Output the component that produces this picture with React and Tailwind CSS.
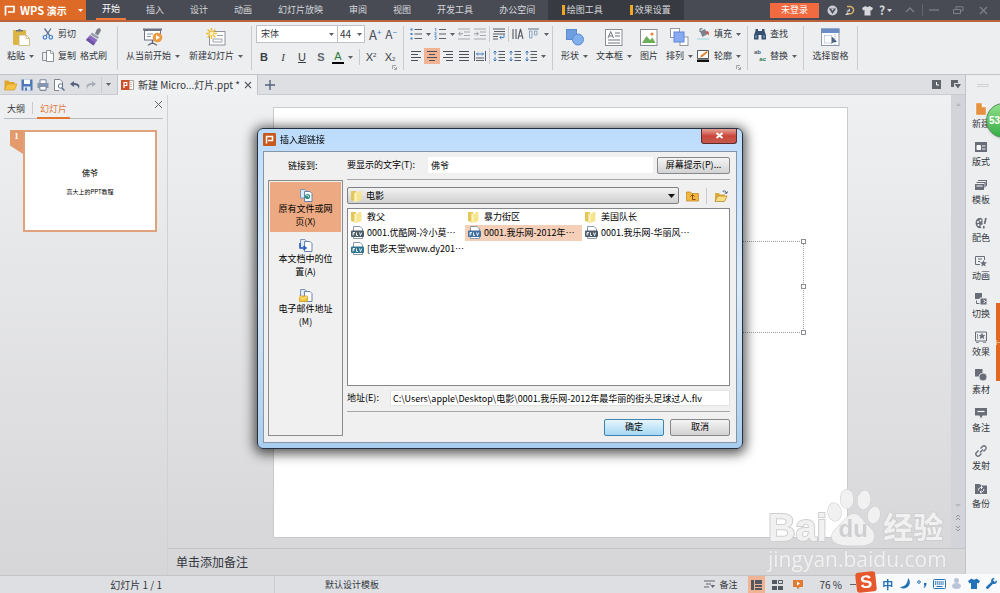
import { useState } from 'react';

const TABS = ['开始', '插入', '设计', '动画', '幻灯片放映', '审阅', '视图', '开发工具', '办公空间'];

const Icon = ({ w = 12, h = 12, className = '', children }) => (
  <svg
    width={w}
    height={h}
    viewBox={`0 0 ${w} ${h}`}
    fill="none"
    className={`shrink-0 ${className}`}
    aria-hidden="true"
  >
    {children}
  </svg>
);

const Caret = ({ className = 'text-[#5c6068]' }) => (
  <Icon w={5} h={3} className={className}>
    <path d="M0 0h5L2.500 3z" fill="currentColor" />
  </Icon>
);

const Corner = () => (
  <Icon w={5} h={5} className="absolute bottom-1 right-[6px]">
    <path d="M.5 4V.5H4M2 4.500h2.500V2M2 2l2 2" stroke="#8b8f96" strokeWidth=".8" />
  </Icon>
);

const Sep = ({ className = 'h-4' }) => <span className={`w-px shrink-0 bg-[#c9cbd0] ${className}`} />;

/* ---------- ribbon icons ---------- */

const PasteIcon = () => (
  <Icon w={18} h={18}>
    <rect x="1" y="2" width="13" height="15" rx="1" fill="#dcb645" />
    <path d="M4 3.500V2h2a1.600 1.600 0 0 1 3 0h2v1.500z" fill="#6d737c" />
    <path d="M7 7h7l3.500 3.500V17.500H7z" fill="#fff" stroke="#c9b062" strokeWidth=".8" />
    <path d="M14 7v3.500h3.500" stroke="#c9b062" strokeWidth=".8" />
  </Icon>
);

const CutIcon = () => (
  <Icon>
    <path d="M2.500.5 8 8M9 .5 3.800 8" stroke="#5f7390" strokeWidth="1.300" />
    <circle cx="3" cy="9.300" r="1.800" stroke="#3d7fcb" strokeWidth="1.200" />
    <circle cx="8.800" cy="9.300" r="1.800" stroke="#3d7fcb" strokeWidth="1.200" />
  </Icon>
);

const CopyIcon = () => (
  <Icon>
    <path d="M4 2.500H.5v8H4" stroke="#8b8f96" />
    <path d="M4.500.5H9L11.500 3v8.500h-7z" fill="#fff" stroke="#8b8f96" />
    <path d="M8.500.5v3h3" stroke="#8b8f96" strokeWidth=".8" />
  </Icon>
);

const BrushIcon = () => (
  <Icon w={18} h={18}>
    <path d="m12 1 3-1 1 2.500-3 5-3-2z" fill="#7b8089" />
    <path d="m7 4.500 7 4.500-1.500 2-7-4.500z" fill="#9aa0a9" />
    <path d="m5 7 7.500 5-4 5.500L1 12z" fill="#8a6cc0" />
    <path d="m3 9.500-2 2.500L8.500 17.500 10 15z" fill="#6f52a8" />
  </Icon>
);

const PlayFromIcon = () => (
  <Icon w={20} h={18}>
    <path d="M0 1.500h19" stroke="#6d7482" strokeWidth="2" />
    <rect x="1.500" y="2.500" width="16" height="9.500" fill="#fff" stroke="#6d7482" />
    <path d="M4 6h6M4 8.500h4" stroke="#8b93a3" />
    <path d="M9.500 12v4M5 17.200l4.500-2.500 4.500 2.500" stroke="#5d6370" strokeWidth="1.300" />
    <circle cx="14.500" cy="9.500" r="4.800" fill="#ee9a3e" />
    <path d="m13 7 4 2.500-4 2.500z" fill="#fff" />
  </Icon>
);

const NewSlideIcon = () => (
  <Icon w={20} h={18}>
    <rect x="3.500" y="3.500" width="15.500" height="13.500" fill="#fff" stroke="#8d929b" />
    <path d="M11 7.500h6M7 11h9v3H7z" stroke="#9aa0aa" />
    <path d="M5.500 0v11M0 5.500h11M1.600 1.600l7.800 7.800M9.400 1.600 1.600 9.400" stroke="#f0bd35" strokeWidth="1.400" />
    <circle cx="5.500" cy="5.500" r="2" fill="#fff3b8" />
  </Icon>
);

const BulletsIcon = () => (
  <Icon>
    <path d="M4.500 1.500H12M4.500 6H12M4.500 10.500H12" stroke="#5a5f68" strokeWidth="1.200" />
    <path d="M.5 1.500h2M.5 6h2M.5 10.500h2" stroke="#4a7fc0" strokeWidth="2" />
  </Icon>
);

const NumbersIcon = () => (
  <Icon>
    <path d="M5 1.500h7M5 6h7M5 10.500h7" stroke="#5a5f68" strokeWidth="1.200" />
    <path d="m.8.8 1-.5v3M.5 4.800h1.800L.8 7h1.800M.5 8.700h1.800L1.500 10c1.500 0 1.200 1.800-.8 1.500" stroke="#4a7fc0" strokeWidth=".8" />
  </Icon>
);

const IndentIcon = ({ flip }) => (
  <Icon>
    <path d="M0 1h12M6 4h6M6 7.500h6M0 11h12" stroke="#a5a8ae" strokeWidth="1.100" />
    <path d={flip ? 'M0 5.800h4M2.500 4l2 1.800-2 1.800' : 'M5 5.800H1M2.500 4l-2 1.800 2 1.800'} stroke="#94979d" />
  </Icon>
);

const WrapIcon = () => (
  <Icon>
    <path d="M0 1h12M1 3.500h11M0 6h12M0 8.500h5M0 11h5" stroke="#565b64" strokeWidth="1.100" />
    <path d="M11 6v3.500H7M8.500 7.800 6.800 9.500l1.700 1.700" stroke="#4a7fc0" />
  </Icon>
);

const AlignIcon = ({ kind }) => {
  const paths = {
    left: 'M1 1.500h10M1 4.500h7M1 7.500h10M1 10.500h7',
    center: 'M1 1.500h10M3 4.500h6M1 7.500h10M3 10.500h6',
    right: 'M1 1.500h10M4 4.500h7M1 7.500h10M4 10.500h7',
    justify: 'M1 1.500h10M1 4.500h10M1 7.500h10M1 10.500h10',
  };
  return (
    <Icon>
      <path d={paths[kind]} stroke="#4a4f58" strokeWidth="1.200" />
    </Icon>
  );
};

const SpreadIcon = () => (
  <Icon>
    <path d="M.5 1v10M11.500 1v10M2 8h8M2 10.500h8" stroke="#565b64" />
    <path d="M2.500 4h7M4 2.500 2.500 4 4 5.500M8 2.500 9.500 4 8 5.500" stroke="#4a7fc0" />
  </Icon>
);

const SpacingIcon = () => (
  <Icon>
    <path d="M5.500 1.500H12M5.500 4.500H12M5.500 7.500H12M5.500 10.500H12" stroke="#565b64" strokeWidth="1.100" />
    <path d="M2 1v4M.5 2.500 2 1l1.500 1.500M2 11V7M.5 9.500 2 11l1.500-1.500" stroke="#3f77bf" />
  </Icon>
);

const VertTextIcon = () => (
  <Icon>
    <path d="M1 1v10M4 1v10M6 11l2.500-10L11 11M7 8h3.500" stroke="#565b64" strokeWidth="1.100" />
  </Icon>
);

const VertAlignIcon = () => (
  <Icon>
    <path d="M0 1h11" stroke="#7b8696" strokeWidth="1.200" />
    <path d="M1.500 3h2.500v7H1.500zM6.500 3H9v4H6.500z" stroke="#8ba3bf" />
  </Icon>
);

const ShapesIcon = () => (
  <Icon w={18} h={18}>
    <rect x=".5" y="1.500" width="10" height="10" fill="#6f9fe0" stroke="#5a8cd2" />
    <circle cx="12" cy="11.500" r="5.500" fill="#7fb0ec" stroke="#5a8cd2" />
  </Icon>
);

const TextBoxIcon = () => (
  <Icon w={18} h={18}>
    <rect x=".5" y="1.500" width="16.500" height="16" fill="#fff" stroke="#878c95" />
    <path d="m3 10 2.700-6.500L8.500 10M4 8h3.500M10 5h5M10 8h5M3 12h12M3 15h12" stroke="#6d727b" strokeWidth="1" />
  </Icon>
);

const PictureIcon = () => (
  <Icon w={18} h={18}>
    <rect x=".5" y="1.500" width="16.500" height="16" fill="#fff" stroke="#878c95" />
    <path d="m2 15 4.500-7 3.500 4 2.500-2.500L15.500 15z" fill="#6cae5a" />
    <circle cx="12" cy="6" r="1.600" fill="#e8823f" />
  </Icon>
);

const ArrangeIcon = () => (
  <Icon w={19} h={18}>
    <rect x=".5" y=".5" width="9" height="9" fill="#fff" stroke="#9298a3" />
    <rect x="10" y="9" width="8" height="8.500" fill="#fff" stroke="#9298a3" />
    <rect x="4" y="4" width="10" height="10" fill="#88aaf0" stroke="#5f86d8" />
  </Icon>
);

const FillIcon = () => (
  <Icon w={13}>
    <path d="M3 3.500 8 1l2.500 5-5 3z" fill="#7a828e" />
    <path d="M3 4V.8h2.500" stroke="#5d6470" />
    <path d="M9.500 3c2 0 3 2 2 4.500C10.500 6 10 5 9 5z" fill="#d24a3d" />
    <path d="M0 10h12v2H0z" fill="#bfe3e6" />
  </Icon>
);

const OutlineIcon = () => (
  <Icon w={13}>
    <path d="M.5.500h11v8H.5z" fill="#fff" stroke="#565b64" />
    <path d="m3 7.500 1-2.300L9.500 1l1.300 1.300-5 4.500z" fill="#e58a35" />
    <path d="M0 9.500h12V12H0z" fill="#111" />
  </Icon>
);

const FindIcon = () => (
  <Icon>
    <path d="M1.500 3V1H4v2h4V1h2.500v2L12 7v4.500H7.500V7h-3v4.500H0V7z" fill="#34506e" />
    <path d="M2 7v3M10 7v3" stroke="#8fb0d0" />
  </Icon>
);

const ReplaceIcon = () => (
  <span className="flex w-3 shrink-0 flex-col font-['Liberation_Sans'] text-[6px] font-bold leading-[7px]" aria-hidden="true">
    <span className="text-left text-[#4a5a70]">ab</span>
    <span className="text-right text-[#2f7a55]">ac</span>
  </span>
);

const PaneIcon = () => (
  <Icon w={19} h={18}>
    <rect x=".5" y="1" width="17.500" height="16.500" fill="#fff" stroke="#8d98ad" />
    <path d="M0 .5h18.500V5H0z" fill="#6e8cc4" />
    <path d="M3.500 7.500h8M3.500 7.500V15M3.500 15h8M14 6v11" stroke="#9aa7c0" strokeDasharray="1 1" />
    <path d="M10.500 8v8l2-1.800 3.500-.4z" fill="#4d5f80" />
  </Icon>
);

/* ---------- ribbon controls ---------- */

function BigButton({ icon, label, caret }) {
  return (
    <button className="flex shrink-0 flex-col items-center pt-[6px]">
      {icon}
      <span className="flex h-5 items-center gap-1 whitespace-nowrap">
        {label}
        {caret && <Caret />}
      </span>
    </button>
  );
}

function SmallButton({ icon, label, caret }) {
  return (
    <button className="flex h-5 items-center gap-1 whitespace-nowrap">
      {icon}
      {label}
      {caret && <Caret />}
    </button>
  );
}

function Tool({ label, active, caret, children }) {
  return (
    <button
      aria-label={label}
      className={`flex h-4 shrink-0 items-center justify-center gap-1 ${caret ? 'w-6' : 'w-4'} ${active ? 'bg-[#f0b394]' : ''}`}
    >
      {children}
      {caret && <Caret />}
    </button>
  );
}

function Ribbon() {
  return (
    <div className="flex h-[53px] shrink-0 items-stretch overflow-hidden border-b border-[#c2c4ca] bg-[#eceef0] text-[#33363c]">
      <div className="flex w-[117px] shrink-0 gap-1 pl-[7px]">
        <BigButton icon={<PasteIcon />} label="粘贴" caret />
        <div className="flex flex-col gap-0.5 pl-1 pt-0.5">
          <SmallButton icon={<CutIcon />} label="剪切" />
          <SmallButton icon={<CopyIcon />} label="复制" />
        </div>
        <BigButton icon={<BrushIcon />} label="格式刷" />
      </div>
      <Sep className="my-1" />
      <div className="flex w-[133px] shrink-0 justify-between px-2">
        <BigButton icon={<PlayFromIcon />} label="从当前开始" caret />
        <BigButton icon={<NewSlideIcon />} label="新建幻灯片" caret />
      </div>
      <Sep className="my-1" />

      <div className="relative flex w-[151px] shrink-0 flex-col gap-[6px] pl-1 pt-[3px]">
        <div className="flex items-center">
          <span className="relative flex h-[18px] w-[82px] items-center border border-[#bfc2c8] bg-white">
            <select aria-label="字体" className="h-full w-full appearance-none bg-transparent pl-1 outline-none">
              <option>宋体</option>
            </select>
            <Caret className="pointer-events-none absolute right-[3px] text-[#5c6068]" />
          </span>
          <span className="relative -ml-px flex h-[18px] w-[28px] items-center border border-[#bfc2c8] bg-white">
            <select aria-label="字号" className="h-full w-full appearance-none bg-transparent pl-0.5 text-[10px] outline-none">
              <option>44</option>
            </select>
            <Caret className="pointer-events-none absolute right-0.5 text-[#5c6068]" />
          </span>
          <button aria-label="增大字号" className="ml-1 flex text-[13px] leading-none text-[#4a4f58]">
            A<span className="text-[8px] leading-none text-[#3f77bf]">+</span>
          </button>
          <button aria-label="减小字号" className="ml-1 flex text-[12px] leading-none text-[#4a4f58]">
            A<span className="text-[8px] leading-none text-[#3f77bf]">−</span>
          </button>
        </div>
        <div className="flex items-center gap-[3px] font-['Liberation_Sans'] text-[11px] leading-none text-[#3a3e46]">
          <button className="h-4 w-4 font-bold">B</button>
          <button className="h-4 w-4 font-['Liberation_Serif'] italic">I</button>
          <button className="h-4 w-4 underline">U</button>
          <button className="h-4 w-4 font-bold text-[#62666e]">S</button>
          <button aria-label="字体颜色" className="flex h-4 w-6 items-center gap-1">
            <span className="w-3 border-b-2 border-black leading-[11px] text-[#2c7a3c]">A</span>
            <Caret />
          </button>
          <Sep />
          <button aria-label="上标" className="flex h-4 w-4 items-center justify-center">
            X<span className="mb-1 text-[6px]">2</span>
          </button>
          <button aria-label="下标" className="flex h-4 w-4 items-center justify-center">
            X<span className="mt-1 text-[6px]">2</span>
          </button>
        </div>
        <Corner />
      </div>
      <Sep className="my-1" />

      <div className="flex w-[148px] shrink-0 flex-col gap-[6px] pl-1 pt-1">
        <div className="flex items-center">
          <Tool label="项目符号" caret><BulletsIcon /></Tool>
          <Tool label="编号" caret><NumbersIcon /></Tool>
          <Tool label="减少缩进"><IndentIcon /></Tool>
          <Tool label="增加缩进"><IndentIcon flip /></Tool>
          <Sep className="mx-px h-4" />
          <Tool label="换行"><WrapIcon /></Tool>
          <Sep className="mx-px h-4" />
          <Tool label="文字方向"><VertTextIcon /></Tool>
          <Tool label="对齐文本" caret><VertAlignIcon /></Tool>
        </div>
        <div className="flex items-center">
          <Tool label="左对齐"><AlignIcon kind="left" /></Tool>
          <Tool label="居中" active><AlignIcon kind="center" /></Tool>
          <Tool label="右对齐"><AlignIcon kind="right" /></Tool>
          <Tool label="两端对齐"><AlignIcon kind="justify" /></Tool>
          <Tool label="分散对齐"><SpreadIcon /></Tool>
          <Sep className="mx-px h-4" />
          <Tool label="增大段距"><SpacingIcon /></Tool>
          <Tool label="减小段距"><SpacingIcon /></Tool>
          <Tool label="行距" caret><SpacingIcon /></Tool>
        </div>
      </div>
      <Sep className="my-1" />

      <div className="relative flex w-[194px] shrink-0 gap-2 pl-2">
        <BigButton icon={<ShapesIcon />} label="形状" caret />
        <BigButton icon={<TextBoxIcon />} label="文本框" caret />
        <BigButton icon={<PictureIcon />} label="图片" />
        <BigButton icon={<ArrangeIcon />} label="排列" caret />
        <div className="-ml-1 flex flex-col gap-0.5 pt-0.5">
          <SmallButton icon={<FillIcon />} label="填充" caret />
          <SmallButton icon={<OutlineIcon />} label="轮廓" caret />
        </div>
        <Corner />
      </div>
      <Sep className="my-1" />

      <div className="flex w-[55px] shrink-0 flex-col gap-0.5 pl-[6px] pt-0.5">
        <SmallButton icon={<FindIcon />} label="查找" />
        <SmallButton icon={<ReplaceIcon />} label="替换" caret />
      </div>
      <Sep className="my-1" />
      <div className="flex w-[53px] shrink-0 justify-center">
        <BigButton icon={<PaneIcon />} label="选择窗格" />
      </div>
      <Sep className="my-1" />
    </div>
  );
}

/* ---------- title bar ---------- */

function TitleBar() {
  return (
    <header className="flex h-[22px] shrink-0 items-stretch border-b-2 border-[#b9633d] bg-[#484b54] text-[#d6d8dc]">
      <button className="flex w-[86px] shrink-0 items-center gap-1 bg-[#dd6a26] pl-1 text-[11px] font-bold text-white">
        <Icon w={12} h={11}>
          <path d="M1.500 10.500v-9H10v5.500H4" stroke="#fff" strokeWidth="1.700" />
        </Icon>
        <span className="whitespace-nowrap">WPS <span className="text-[10px]">演示</span></span>
        <Caret className="ml-auto mr-[3px] text-white" />
      </button>
      <nav className="ml-[3px] flex shrink-0">
        {TABS.map((tab, i) => (
          <button key={tab} className={`px-[7px] ${i === 0 ? 'text-white' : ''}`}>
            <span className={`flex h-5 items-center px-[6px] ${i === 0 ? 'border-b-2 border-[#ee7a3c]' : ''}`}>{tab}</span>
          </button>
        ))}
      </nav>
      <div className="flex w-[136px] shrink-0 justify-around bg-[#373a41]">
        {['绘图工具', '效果设置'].map((tab) => (
          <button key={tab} className="flex items-center gap-0.5">
            <span className="h-[10px] w-[3px] bg-[#f2a622]" />
            {tab}
          </button>
        ))}
      </div>
      <div className="ml-auto flex items-center pr-3">
        <button className="mr-2 h-[15px] w-[49px] bg-[#f26a3f] text-white">未登录</button>
        <button aria-label="云服务" className="w-[18px]">
          <Icon w={11} h={11}>
            <circle cx="5.500" cy="5.500" r="5" fill="#c9ccd2" />
            <path d="M2 3.500h7L5.500 9z" fill="#484b54" />
            <path d="m4 3.500 1.500 2.500L7 3.500z" fill="#c9ccd2" />
          </Icon>
        </button>
        <button aria-label="同步" className="w-[17px]">
          <Icon w={10} h={11}>
            <path d="M2 1.500h3.500a3.700 3.700 0 1 1-3 6.500" stroke="#d6b064" strokeWidth="1.500" />
            <path d="M5 3.500v3H1M0 10l2.500-3 1.500 3z" fill="#c9ccd2" />
          </Icon>
        </button>
        <button aria-label="皮肤" className="w-[17px]">
          <Icon w={11} h={11}>
            <path d="M3.500 1 0 3l1.200 2.500L2.500 5v5.500h6V5l1.300.5L11 3 7.500 1c-1 1.300-3 1.300-4 0z" fill="#d6d8dc" />
          </Icon>
        </button>
        <button aria-label="帮助" className="flex w-[26px] items-center gap-0.5 text-[12px] font-bold">
          ?<Caret className="text-[#d6d8dc]" />
        </button>
        <button aria-label="收起功能区" className="w-[17px] text-[#7d8088]">
          <Icon w={10} h={6}><path d="m1 5 4-4 4 4" stroke="currentColor" strokeWidth="1.300" /></Icon>
        </button>
        <Sep className="h-3 opacity-20" />
        <button aria-label="最小化" className="ml-[6px] w-6 text-[#7d8088]">
          <Icon w={10} h={6}><path d="M0 3h10" stroke="currentColor" strokeWidth="1.300" /></Icon>
        </button>
        <button aria-label="还原" className="w-[26px] text-[#7d8088]">
          <Icon w={11} h={8}>
            <path d="M.5 3.500h7v4h-7zM3 3V.8h7v4H8" stroke="currentColor" />
          </Icon>
        </button>
        <button aria-label="关闭" className="text-[#7d8088]">
          <Icon w={9} h={9}><path d="m1 1 7 7M8 1 1 8" stroke="currentColor" strokeWidth="1.300" /></Icon>
        </button>
      </div>
    </header>
  );
}

/* ---------- document tabs ---------- */

const PptMark = () => (
  <Icon w={13}>
    <path d="M7 1.500h5.500v9H7" fill="#fff" stroke="#b3a29a" />
    <path d="M9 3.500h2M9 5.500h2M9 7.500h2" stroke="#c9b8b0" />
    <rect y="1" width="8.500" height="10" fill="#c9502a" />
    <path d="M3 9V3.500h2.800v3H3" stroke="#fff" strokeWidth="1.200" />
  </Icon>
);

function DocumentBar() {
  return (
    <div className="flex h-5 shrink-0 items-stretch border-b border-[#c9ccd1] bg-[#dddfe3]">
      <div className="flex w-[118px] shrink-0 items-center gap-1 border-r border-[#c2c4ca] pl-1">
        <button aria-label="打开">
          <Icon w={13}>
            <path d="M.5 11V1.500h4l1 1.500h5v2" fill="#e2a62c" />
            <path d="M.5 11 3 5h10l-2.500 6z" fill="#f5c445" stroke="#d59a25" strokeWidth=".7" />
          </Icon>
        </button>
        <button aria-label="保存">
          <Icon>
            <path d="M.5.5h11v11H.5z" fill="#4d78ba" />
            <path d="M3 .5h6V5H3z" fill="#fff" /><path d="M2.500 7.500h7v4h-7z" fill="#e3ebf6" />
            <path d="M4 8.500h2v3H4z" fill="#4d78ba" />
          </Icon>
        </button>
        <button aria-label="打印">
          <Icon>
            <path d="M3 4V.8h6V4M3 8v3.300h6V8" fill="#fff" stroke="#77839a" />
            <path d="M.5 4h11v5h-11z" fill="#8796b0" /><path d="M3 7.500h6v3.500H3z" fill="#fff" stroke="#77839a" strokeWidth=".7" />
          </Icon>
        </button>
        <button aria-label="打印预览">
          <Icon>
            <path d="M9.500 6V3L7 .5H1.500v11H6" fill="#fff" stroke="#7b8390" />
            <circle cx="7.500" cy="7" r="2.200" stroke="#5b6f90" /><path d="m9 9 2.500 2.500" stroke="#5b6f90" strokeWidth="1.500" />
          </Icon>
        </button>
        <button aria-label="撤销">
          <Icon><path d="M5 2 1 5l4 3V6c3 0 4.500 1 4.500 4C12 6 9 4 5 4z" fill="#56637c" /></Icon>
        </button>
        <button aria-label="恢复">
          <Icon><path d="m7 2 4 3-4 3V6c-3 0-4.500 1-4.500 4C0 6 3 4 7 4z" fill="#a9aeb8" /></Icon>
        </button>
        <Sep />
        <button aria-label="更多"><Caret /></button>
      </div>
      <div className="-mb-px flex w-[139px] shrink-0 items-center bg-[#f0f1f2] pl-[3px] text-[#33363c]">
        <PptMark />
        <span className="ml-1 flex-1 whitespace-nowrap text-[10px]">新建 Micro...灯片.ppt *</span>
        <button aria-label="关闭文档" className="mr-[5px]">
          <Icon w={8} h={8}><path d="m1 1 6 6M7 1 1 7" stroke="#565b64" strokeWidth="1.100" /></Icon>
        </button>
      </div>
      <button aria-label="新建文档" className="border-l border-[#c2c4ca] px-[7px]">
        <Icon w={10} h={10}><path d="M5 0v10M0 5h10" stroke="#56637c" strokeWidth="1.400" /></Icon>
      </button>
      <div className="ml-auto flex items-center gap-[10px] pr-1">
        <Icon w={9} h={9}>
          <path d="M0 0h9v9H0z" fill="#60646d" /><path d="M4.500 2v3H7" stroke="#fff" />
        </Icon>
        <Icon w={10} h={9}>
          <path d="M0 0h7v3H3v4H0z" fill="#60646d" /><path d="M3.500 4h6.500L7 8.500z" fill="#60646d" />
        </Icon>
      </div>
    </div>
  );
}

/* ---------- left panel and canvas ---------- */

function SlidePanel() {
  return (
    <aside className="flex w-[168px] shrink-0 flex-col border-r border-[#cfd1d5] px-1 text-[#33363c]">
      <div className="flex h-6 items-end border-b border-[#b9bbc3]">
        <button className="h-[19px] px-[3px]">大纲</button>
        <Sep className="mx-1 mb-1 h-3" />
        <button className="-mb-px h-[19px] border-b-2 border-[#e2762f] px-[3px] text-[#e07a40]">幻灯片</button>
        <button aria-label="关闭面板" className="mb-[9px] ml-auto">
          <Icon w={9} h={9}><path d="m1 1 7 7M8 1 1 8" stroke="#5f646d" /></Icon>
        </button>
      </div>
      <div className="flex px-[6px] pt-[11px]">
        <div className="h-6 w-[13px] bg-[#e39a6c] text-center font-['Liberation_Serif'] text-[9px] font-bold leading-3 text-white [clip-path:polygon(0_0,100%_0,100%_100%,0_65%)]">
          1
        </div>
        <div className="flex h-[102px] w-[134px] flex-col items-center justify-center gap-[10px] border-2 border-[#e0a27c] bg-white pt-0.5 text-black">
          <span className="text-[8px] leading-[10px]">佛爷</span>
          <span className="text-[6px] leading-[8px]">高大上的PPT教程</span>
        </div>
      </div>
    </aside>
  );
}

const Handle = ({ className }) => (
  <span className={`absolute h-[5px] w-[5px] border border-[#8c8e92] bg-white ${className}`} />
);

function Canvas() {
  return (
    <div className="flex min-h-0 flex-1">
      <div className="flex min-w-0 flex-1 justify-center overflow-hidden pb-[10px] pl-0.5 pt-3">
        <div className="relative aspect-[4/3] h-full border border-[#c9cacd] bg-white">
          {/* subtitle placeholder */}
          <div className="absolute inset-x-[7.4%] top-[31%] h-[21.5%] border border-dotted border-[#9b9da1]">
            <Handle className="-right-[3px] -top-[3px]" />
            <Handle className="-right-[3px] top-[calc(50%-3px)]" />
            <Handle className="-bottom-[3px] -right-[3px]" />
          </div>
        </div>
      </div>
      <div className="flex w-[14px] shrink-0 flex-col items-center justify-between bg-[#d2d4d9] pb-4 pt-2">
        <Icon w={5} h={3}><path d="m0 3 2.500-3L5 3z" fill="#b5b8bf" /></Icon>
        <Icon w={6} h={28}>
          <path d="M0 0h6L3 3z" fill="#b5b8bf" />
          <path d="m1 13 2-2 2 2M1 16l2-2 2 2M1 22l2 2 2-2M1 25l2 2 2-2" stroke="#85888f" strokeWidth=".8" />
        </Icon>
      </div>
    </div>
  );
}

/* ---------- right task bar ---------- */

const G = '#686d78';

const TASKS = [
  ['新建', <path d="M1 0h6l4 4v8H1zM7 0v4h4" fill="#e6913f" stroke="#fff" strokeWidth=".4" />],
  ['版式', <><path d="M0 1h12v10H0z" fill={G} /><path d="M2 4.500h3.500v4H2zM7 5h3.500M7 8h3.500" fill="#fff" stroke="#fff" strokeWidth=".9" /></>],
  ['模板', <><path d="M3 1.500h8.500v5.500M1.500 3.500h8.500v5" stroke={G} strokeWidth="1.200" /><path d="M0 5h9v6H0z" fill={G} /><path d="M1.500 7h6" stroke="#fff" /></>],
  ['配色', <><path d="M5.500.8C2 .8 0 4 .8 7.500 1.500 11 5 12 6.500 10.500 5 9.500 5 8 7.500 7.500V2z" fill={G} /><circle cx="3" cy="5" r="1" fill="#fff" /><circle cx="5.500" cy="3.500" r="1" fill="#fff" /><circle cx="3.500" cy="8" r="1" fill="#fff" /><path d="m11 1-1.500 6M9 9l-.5 2.500" stroke={G} strokeWidth="1.700" /></>],
  ['动画', <><path d="M9.500 5V1.500H.5v8H5M3 4h4M3 6.500h2" stroke={G} /><path d="m8.500 5 1 2.200 2.500.2-2 1.600.7 2.500-2.200-1.300-2.200 1.300.7-2.500-2-1.600 2.500-.2z" fill={G} /></>],
  ['切换', <><path d="M0 0h7v6H0z" fill={G} /><path d="M5 5h7v7H5z" fill={G} stroke="#eceef0" /><path d="M1.500 7.500v3h3M7 8.500h3" stroke={G} /><path d="m8.500 7 2 1.500-2 1.500" stroke="#fff" /></>],
  ['效果', <><path d="M.5 1h11v9H.5z" stroke={G} /><path d="m7 2.500.8 1.800 1.800.2-1.300 1.200.4 1.800L7 6.500l-1.700 1 .4-1.800-1.300-1.200 1.800-.2zM2.500 3v5M1 11.500h3M8 11.500h3" fill={G} stroke={G} strokeWidth=".7" /></>],
  ['素材', <><path d="M0 0h7.500v7.500H0z" fill={G} /><circle cx="8" cy="8" r="4" fill={G} stroke="#eceef0" strokeWidth=".8" /></>],
  ['备注', <><path d="M0 1h12v7.500H7.500L6 11.500 4.500 8.500H0z" fill={G} /><path d="M2.500 4.500h7" stroke="#fff" strokeWidth="1.200" /></>],
  ['发射', <path d="m5 7.500 3-3M5.500 3.500l2-2a2.100 2.100 0 0 1 3 3l-2 2M6.500 8.500l-2 2a2.100 2.100 0 0 1-3-3l2-2" stroke={G} strokeWidth="1.400" />],
  ['备份', <><path d="M0 1h5l1 1.500h6V11H0z" fill={G} /><path d="M3.500 7.500A2.700 2.700 0 0 1 7 4.500M8.800 6A2.700 2.700 0 0 1 5.500 9M6 3l1.500 1.500L6 6M6.500 7.500 5 9l1.500 1.500" stroke="#fff" strokeWidth=".9" /></>],
];

function TaskBar() {
  return (
    <aside className="relative flex w-[35px] shrink-0 flex-col items-center border-l border-[#c2c4ca] bg-[#eceef0] text-[#33363c]">
      <div className="mb-4 mt-[9px] h-[3px] w-3 shrink-0 border-y border-[#cfd1d5]" />
      {TASKS.map(([label, icon]) => (
        <button key={label} className="mr-1 flex h-[38px] shrink-0 flex-col items-center gap-[3px]">
          <Icon>{icon}</Icon>
          <span className="leading-3">{label}</span>
        </button>
      ))}
      <div className="absolute right-0 top-[228px] flex h-[78px] w-1 items-center bg-[#e2671f]">
        <Icon w={4} h={5}><path d="M.5 0v5M1 2.500h3" stroke="#f6c9a8" strokeWidth=".8" /></Icon>
      </div>
      <div className="absolute -right-[21px] top-[28px] h-[35px] w-[35px] rounded-full border border-[#5d8f5f] bg-gradient-to-b from-[#8fe08a] to-[#2fae45] pl-0.5 font-['Liberation_Sans'] text-[10px] font-bold leading-[34px] text-white shadow">
        53
      </div>
    </aside>
  );
}

/* ---------- hyperlink dialog ---------- */

const Folder = () => (
  <Icon w={11} h={12}>
    <path d="M0 1h5v10.500L0 10z" fill="#e3c757" />
    <path d="M3.500 2.500H7L8 1h2.500v9L5 12H3.500z" fill="#f6e48f" />
    <path d="M3.500 2.500V12l2-1V3.500z" fill="#fbf3c4" />
  </Icon>
);

const VideoFile = ({ fill = '#4c5a67' }) => (
  <Icon w={13} h={13}>
    <path d="M2.500.5H9L11.500 3v9.500h-9z" fill="#fff" stroke="#8b98a5" />
    <rect y="4.500" width="13" height="6.500" rx="1" fill={fill} />
    <path d="M2 9.500v-3h2M2 8h1.500M5.500 6.500v3H7M8.500 6.500l1 3 1.200-3" stroke="#fff" strokeWidth=".9" />
  </Icon>
);

const FILES = [
  { name: '教父', icon: <Folder /> },
  { name: '暴力街区', icon: <Folder /> },
  { name: '美国队长', icon: <Folder /> },
  { name: '0001.优酷网-冷小莫…', icon: <VideoFile /> },
  { name: '0001.我乐网-2012年…', icon: <VideoFile fill="#3f6f9e" /> },
  { name: '0001.我乐网-华丽风…', icon: <VideoFile /> },
  { name: '[电影天堂www.dy201…', icon: <VideoFile fill="#2f7391" /> },
];

const LinkIcon = ({ children }) => (
  <Icon w={14} h={13}>
    <path d="M1.500.5H6L8 2.500V9H1.500z" fill="#dfeaf8" stroke="#7f93b5" />
    <path d="M5.500 2.500H11l2 2v8H5.500z" fill="#fff" stroke="#6c83ab" />
    {children}
  </Icon>
);

const TARGETS = [
  ['原有文件或网', '页(X)', <LinkIcon><circle cx="8.500" cy="7.500" r="2.600" fill="#2e8f86" /><path d="M7 6.500h2l1 2" stroke="#bfe3d0" /></LinkIcon>],
  ['本文档中的位', '置(A)', <LinkIcon><path d="M1 4v5h5M4.500 7l2.500 2-2.500 2" stroke="#2d5fc0" strokeWidth="1.600" /></LinkIcon>],
  ['电子邮件地址', '(M)', <LinkIcon><path d="M0 7h8.500v5.500H0z" fill="#f3c53c" stroke="#c9962a" strokeWidth=".7" /><path d="m0 7 4.200 3 4.300-3" stroke="#fff3c0" strokeWidth=".8" /></LinkIcon>],
];

const WIN_BUTTON = 'rounded-[2px] border border-[#85888d] bg-gradient-to-b from-[#f4f4f4] to-[#d2d2d2]';

function LinkDialog() {
  const [target, setTarget] = useState(0);
  const [selected, setSelected] = useState(4);
  const [text, setText] = useState('佛爷');
  const [address, setAddress] = useState('C:\\Users\\apple\\Desktop\\电影\\0001.我乐网-2012年最华丽的街头足球过人.flv');

  return (
    <div className="pointer-events-none fixed inset-0 flex items-center justify-center pb-[17px]">
      <section
        role="dialog"
        aria-labelledby="link-title"
        className="pointer-events-auto flex w-[486px] flex-col rounded-[6px] border border-[#263241] bg-gradient-to-b from-[#bcdcfc] via-[#dcebf8] to-[#a9cdee] px-[5px] pb-[5px] text-black shadow-[0_2px_12px_3px_rgba(0,0,0,0.65)]"
      >
        <div className="flex h-[22px] items-start">
          <h2 id="link-title" className="flex h-[22px] items-center gap-1">
            <Icon w={13} h={13}>
              <rect width="13" height="13" rx="1" fill="#c9581c" />
              <path d="M3.500 10.500v-7h6v4H5" stroke="#fff" strokeWidth="1.500" />
            </Icon>
            插入超链接
          </h2>
          <button
            aria-label="关闭"
            className="ml-auto flex h-[15px] w-9 items-center justify-center rounded-b-[3px] border border-t-0 border-[#5e2b2a] bg-gradient-to-b from-[#e3a299] via-[#c9463a] to-[#c45b4e]"
          >
            <Icon w={9} h={7}><path d="m1.500 1 6 5M7.500 1l-6 5" stroke="#fff" strokeWidth="2" /></Icon>
          </button>
        </div>

        <div className="flex h-[292px] gap-1 border border-[#8496a8] bg-[#f0f0f0] pb-[6px] pl-1 pr-[6px]">
          <div className="flex w-[75px] shrink-0 flex-col">
            <span className="flex h-7 items-center pl-5">链接到:</span>
            <div className="flex-1 border border-[#8a8c90] p-px">
              {TARGETS.map(([first, second, icon], i) => (
                <button
                  key={first}
                  onClick={() => setTarget(i)}
                  className={`flex h-[50px] w-full flex-col items-center pt-[7px] ${target === i ? 'bg-[#eca982]' : ''}`}
                >
                  {icon}
                  <span className="flex flex-col items-center whitespace-nowrap leading-[13px]">
                    <span>{first}</span>
                    <span>{second}</span>
                  </span>
                </button>
              ))}
            </div>
          </div>

          <div className="flex min-w-0 flex-1 flex-col">
            <div className="flex h-7 items-center border-b border-[#a5a7aa]">
              <label htmlFor="link-text" className="w-[81px] shrink-0 whitespace-nowrap">要显示的文字(T):</label>
              <input
                id="link-text"
                value={text}
                onChange={(e) => setText(e.target.value)}
                className="h-4 min-w-0 flex-1 bg-white px-[3px] outline-none"
              />
              <button className={`ml-1 h-[17px] w-[73px] ${WIN_BUTTON}`}>屏幕提示(P)...</button>
            </div>

            <div className="flex h-7 items-center pt-1">
              <div className="relative flex flex-1 items-center">
                <span className="pointer-events-none absolute left-1"><Folder /></span>
                <select
                  aria-label="查找范围"
                  className="h-[17px] w-full appearance-none rounded-[2px] border border-[#7d8085] bg-gradient-to-b from-[#f2f2f2] to-[#d0d0d0] pl-[18px] outline-none"
                >
                  <option>电影</option>
                </select>
                <Icon w={7} h={4} className="pointer-events-none absolute right-1"><path d="M0 0h7L3.500 4z" fill="#111" /></Icon>
              </div>
              <button aria-label="上一级" className="ml-[7px]">
                <Icon w={13}>
                  <path d="M.5 2h4l1 1.500h7V11H.5z" fill="#f0b93e" stroke="#c98a28" strokeWidth=".8" />
                  <path d="M6.500 9.500V5M4.500 6.500l2-2 2 2M6.500 9.500h3" stroke="#8a4a12" />
                </Icon>
              </button>
              <Sep className="mx-[7px] h-4" />
              <button aria-label="浏览文件" className="mr-0.5">
                <Icon w={14}>
                  <path d="M1 11V3h4l1 1.500h5V6" fill="#dcae3c" />
                  <path d="M1 11.500 3.500 6H13l-2.500 5.500z" fill="#f8df86" stroke="#b98a2a" strokeWidth=".8" />
                  <path d="M8.500 2c1.500-2 3.500-1 4 1M13.500 1.500l-.8 2-2-.8" stroke="#46597c" />
                </Icon>
              </button>
            </div>

            <ul className="grid flex-1 grid-cols-3 content-start border border-[#83868b] bg-white pb-1 pr-[30px]">
              {FILES.map((file, i) => (
                <li key={file.name} className="min-w-0">
                  <button
                    onClick={() => setSelected(i)}
                    className={`flex h-4 w-full items-center gap-[3px] whitespace-nowrap pl-[3px] ${selected === i ? 'bg-[#f6cfb9]' : ''}`}
                  >
                    <span className="flex w-[13px] shrink-0">{file.icon}</span>
                    {file.name}
                  </button>
                </li>
              ))}
            </ul>

            <div className="flex h-[26px] shrink-0 items-center border-b border-[#a5a7aa]">
              <label htmlFor="link-address" className="w-[43px] shrink-0">地址(E):</label>
              <input
                id="link-address"
                value={address}
                onChange={(e) => setAddress(e.target.value)}
                className="h-4 min-w-0 flex-1 border border-[#e3e3e3] bg-white px-0.5 outline-none"
              />
            </div>
            <div className="flex shrink-0 justify-end gap-[6px] pt-[7px]">
              <button className="h-[17px] w-[60px] rounded-[2px] border border-[#3f84ad] bg-gradient-to-b from-[#e6f5fd] to-[#a5d8f3]">确定</button>
              <button className={`h-[17px] w-[60px] ${WIN_BUTTON}`}>取消</button>
            </div>
          </div>
        </div>
      </section>
    </div>
  );
}

/* ---------- status bar, input method bar, watermark ---------- */

function StatusBar() {
  return (
    <footer className="flex h-[18px] shrink-0 items-center border-t border-[#c2c4ca] bg-[#dddfe3] text-[#33363c]">
      <span className="w-[162px] shrink-0 pl-1 text-right text-[10px]">幻灯片 1 / 1</span>
      <Sep className="ml-28 h-[18px]" />
      <span className="ml-[50px]">默认设计模板</span>
      <div className="ml-auto flex h-full items-center pr-[142px]">
        <button className="mr-[11px] flex items-center gap-1">
          <Icon w={11} h={9}><path d="M0 1h11M2 4h5M0 7h5" stroke="#60646d" /><path d="M6.500 5H11L8.700 8z" fill="#60646d" /></Icon>
          备注
        </button>
        <button aria-label="普通视图" className="flex h-full w-[17px] items-center justify-center bg-[#f0b394]">
          <Icon w={11} h={10}><path d="M0 0h3v10H0zM4 0h7v4H4zM4 5h7v2H4zM4 8h7v2H4z" fill="#53575f" /></Icon>
        </button>
        <button aria-label="幻灯片浏览" className="ml-[7px]">
          <Icon w={11} h={10}><path d="M0 0h5v4H0zM0 6h5v4H0zM6 6h5v4H6z" fill="#53575f" /><path d="M6.500.5h4v3h-4z" stroke="#53575f" /></Icon>
        </button>
        <button aria-label="从当前放映" className="ml-[10px]">
          <Icon w={10} h={11}><path d="M0 1h10v7H6.500L5 10.500 3.500 8H0z" fill="#de7c33" /><path d="m4 2.500 3 2-3 2z" fill="#fff" /></Icon>
        </button>
        <span className="ml-4 whitespace-nowrap text-[10px]">76 %</span>
        <span className="ml-2 h-px w-2 bg-[#60646d]" />
      </div>
    </footer>
  );
}

function InputMethodBar() {
  const blue = '#2272b8';
  return (
    <div className="fixed bottom-0 right-0 flex h-[19px] w-[144px] items-center justify-between rounded-l-sm bg-[#f8fafb] pr-[3px]">
      <div className="-mt-1 flex h-5 w-5 -rotate-6 items-center justify-center rounded-[3px] bg-[#e5582b] font-['Liberation_Sans'] text-[18px] font-bold leading-none text-white">
        S
      </div>
      <span className="text-[11px] font-bold text-[#2272b8]">中</span>
      <Icon w={11} h={11}><path d="M8 0c4 4 1 10-4 10.500-2 0-3.500-.7-4-1.500C5 9 8 5 8 0z" fill={blue} /></Icon>
      <Icon w={10} h={8}><circle cx="2" cy="2" r="1.300" stroke={blue} /><path d="M7 3h2.500c0 2.500-.8 4-2.500 5l-.5-1C7.500 6.500 7.700 6 7.700 5.500H7z" fill={blue} /></Icon>
      <Icon w={13} h={10}>
        <rect x=".5" y=".5" width="12" height="9" rx="1" stroke={blue} />
        <path d="M2 3h9M2 5h9" stroke={blue} strokeWidth="1.300" strokeDasharray="1.300 .8" /><path d="M3.500 7.500h6" stroke={blue} />
      </Icon>
      <Icon w={9} h={11}><circle cx="4.500" cy="2.500" r="2.500" fill="#b9c4d8" /><path d="M0 8c0-4 9-4 9 0 0 4-9 4-9 0z" fill="#b9c4d8" /></Icon>
      <Icon w={12} h={11}><path d="M3.500.5 0 3l1.500 2.500L3 4.800V11h6V4.800l1.500.7L12 3 8.500.5c-1 1.500-4 1.500-5 0z" fill={blue} /></Icon>
      <Icon w={11} h={11}><path d="M10.800 2.200 8.800 4 7 2.300 8.800.3C6.500-.5 4.500 1.500 5.300 4L.5 8.500a1.400 1.400 0 0 0 2 2L7 5.800c2.500.8 4.500-1.200 3.800-3.600z" fill={blue} /></Icon>
    </div>
  );
}

function Watermark() {
  return (
    <div
      aria-hidden="true"
      className="pointer-events-none fixed bottom-[22px] right-[54px] flex w-[178px] flex-col text-[#f1f1f2] [paint-order:stroke_fill] [-webkit-text-stroke:2px_#cfcfd1]"
    >
      <div className="flex items-end font-['Liberation_Sans',_'Noto_Sans_CJK_SC'] text-[38px] font-bold leading-[38px]">
        <span>Bai</span>
        <span className="relative flex h-[60px] w-[52px] items-end justify-center">
          <Icon w={54} h={60} className="absolute bottom-0 left-0">
            <g fill="#f1f1f2" stroke="#cfcfd1" strokeWidth="1.200">
              <ellipse cx="7.500" cy="25" rx="6.500" ry="9" transform="rotate(-10 7.500 25)" />
              <ellipse cx="20" cy="12" rx="6.500" ry="9.500" />
              <ellipse cx="37" cy="13" rx="6.500" ry="9.500" transform="rotate(8 37 13)" />
              <ellipse cx="47" cy="28" rx="6" ry="8.500" transform="rotate(14 47 28)" />
              <path d="M27 27c6 0 8 6 13 11 6 5 8 8 7 13-1 6-7 8-20 7.500C14 59 6 57 5 51c-1-5 3-8 8-13 5-5 8-11 14-11z" />
            </g>
          </Icon>
          <span className="relative pb-1 text-[24px] leading-7 text-[#cfcfd1] [-webkit-text-stroke:0]">du</span>
        </span>
        <span className="ml-1 text-[30px] leading-[38px]">经验</span>
      </div>
      <span className="font-['Open_Sans'] text-[21px] leading-[24px] [-webkit-text-stroke:1px_#cfcfd1]">jingyan.baidu.com</span>
    </div>
  );
}

export default function App() {
  return (
    <div lang="zh-CN" className="flex h-screen w-full flex-col overflow-hidden bg-[#dddfe3] font-['Noto_Sans_CJK_SC',_'Liberation_Sans',_sans-serif] text-[9px] leading-3">
      <TitleBar />
      <Ribbon />
      <div className="flex min-h-0 flex-1">
        <div className="flex min-w-0 flex-1 flex-col">
          <DocumentBar />
          <div className="flex min-h-0 flex-1 bg-gradient-to-b from-[#eff0f1] to-[#d6d6d8]">
            <SlidePanel />
            <main className="flex min-w-0 flex-1 flex-col">
              <Canvas />
              <div className="flex h-[27px] shrink-0 items-center border-t border-[#c2c4ca] pl-2 text-[12px] text-[#33363c]">单击添加备注</div>
            </main>
          </div>
        </div>
        <TaskBar />
      </div>
      <StatusBar />
      <Watermark />
      <InputMethodBar />
      <LinkDialog />
    </div>
  );
}
